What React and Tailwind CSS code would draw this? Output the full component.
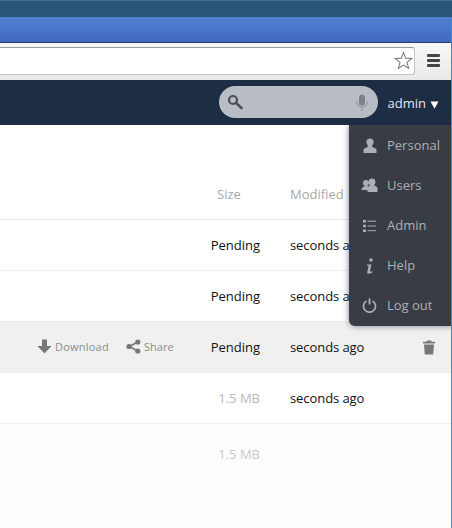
import React from "react";

const Row = ({ size, pending, time, hover, last }) => (
  <div className={`flex items-center text-[13px] leading-none ${last ? "h-[104px] pb-[44px] bg-[#fdfdfd]" : "h-[51px] border-b border-[#eeeeee]"} ${hover ? "bg-[#f0f0f0]" : ""} ${!hover && !last ? "bg-white" : ""}`}>
    <div className="w-[37px] shrink-0" />
    <div className="w-[171px] shrink-0 flex items-center text-[11px] text-[#8c8c8c] -mt-[1px] tracking-[0.02em]">
      {hover && (
        <>
          <svg width="15" height="15" viewBox="0 0 15 15" className="mr-[3px]">
            <path d="M5 0.500h5v6.500h4.500L7.500 14.500 0.500 7H5z" fill="#777" />
          </svg>
          <span className="w-[71px]">Download</span>
          <svg width="15" height="15" viewBox="0 0 15 15" className="mr-[3px]">
            <path d="M11.500 3 3.500 7.500l8 4.500" stroke="#777" strokeWidth="1.600" fill="none" />
            <circle cx="11.800" cy="3" r="2.600" fill="#777" />
            <circle cx="3" cy="7.500" r="2.600" fill="#777" />
            <circle cx="11.800" cy="12" r="2.600" fill="#777" />
          </svg>
          <span className="tracking-normal">Share</span>
        </>
      )}
    </div>
    <div className={`w-[52px] shrink-0 text-right ${pending ? "text-[#111]" : last ? "text-[#c8c8c8]" : "text-[#b8b8b8]"}`}>{size}</div>
    <div className="w-[30px] shrink-0" />
    <div className="w-[132px] shrink-0 text-[#111] whitespace-nowrap tracking-[-0.006em]">{time}</div>
    {hover && (
      <svg width="14" height="15" viewBox="0 0 14 15">
        <path d="M5 0.500h4l.7 1.300H13v1.700H1V1.800h3.300zM2 4.500h10l-.8 10H2.800z" fill="#777" />
      </svg>
    )}
  </div>
);

const MenuItem = ({ icon, label }) => (
  <div className="h-10 flex items-center">
    <div className="w-[38px] shrink-0 flex justify-center -mt-[1px] pl-[3px]">{icon}</div>
    <span className="whitespace-nowrap">{label}</span>
  </div>
);

const c = "#abaeb2";

export default function App() {
  return (
    <div className="relative w-[452px] h-[528px] overflow-hidden bg-white font-['Open_Sans',sans-serif]">
      <div className="h-[17px] bg-[#2a5678] border-t border-[#3f6f91]" />
      <div className="h-[26px] bg-gradient-to-b from-[#5080d0] to-[#3f6ac0] border-b border-[#2c3f68]" />
      <div className="h-[37px] bg-gradient-to-b from-[#f8f8f8] to-[#e9e9e9] flex items-center pb-[2px]">
        <div className="w-[415px] h-[28px] bg-white border border-[#c4c4c4] border-t-[#9a9a9a] border-l-0 rounded-r-[3px] flex items-center justify-end pr-[1px]">
          <svg width="19" height="19" viewBox="0 0 20 20">
            <path d="M10 1.500 12.300 7.500 18.800 7.900 13.700 12 15.400 18.300 10 14.800 4.600 18.300 6.300 12 1.200 7.900 7.700 7.500z" fill="#fff" stroke="#7a7a7a" strokeWidth="1.100" />
          </svg>
        </div>
        <div className="ml-[12px] w-[13px] flex flex-col gap-[2px]">
          <div className="h-[3px] bg-[#444] rounded-[1px]" />
          <div className="h-[3px] bg-[#444] rounded-[1px]" />
          <div className="h-[3px] bg-[#444] rounded-[1px]" />
        </div>
      </div>
      <div className="h-[45px] bg-[#1d2d44] flex items-center justify-end">
        <div className="w-[159px] h-8 rounded-2xl bg-[#b8bcc4] flex items-center justify-between pl-2 pr-[9px] -mt-[1px]">
          <svg width="16" height="16" viewBox="0 0 16 16">
            <circle cx="6" cy="6" r="4" fill="none" stroke="#4a4f58" strokeWidth="2.200" />
            <path d="M9 9l5.500 5" stroke="#4a4f58" strokeWidth="2.600" strokeLinecap="round" />
          </svg>
          <svg width="14" height="17" viewBox="0 0 14 17">
            <rect x="4" y="0.500" width="6" height="11" rx="3" fill="#7d8189" />
            <path d="M1.500 7.500c0 7 11 7 11 0M7 13.500V17" fill="none" stroke="#8f939b" strokeWidth="1.200" />
          </svg>
        </div>
        <div className="ml-[10px] mr-[13px] mt-[2px] text-[13px] text-[#e4e7ec] flex items-center whitespace-nowrap">
          admin
          <svg width="9" height="8" viewBox="0 0 9 8" className="ml-[4px] mt-[2px]">
            <path d="M0.500 0.500h8L4.500 7.800z" fill="#fff" />
          </svg>
        </div>
      </div>

      <div className="h-[95px] flex items-end pb-[18px] text-[13px] leading-none text-[#a8a8a8] border-b border-[#e6e6e6]">
        <div className="w-[217px] shrink-0" />
        <div className="w-[73px] shrink-0">Size</div>
        <div>Modified</div>
      </div>
      <Row size="Pending" pending time="seconds ago" />
      <Row size="Pending" pending time="seconds ago" />
      <Row size="Pending" pending time="seconds ago" hover />
      <Row size="1.5 MB" time="seconds ago" />
      <Row size="1.5 MB" time="" last />

      <div className="absolute left-[349px] top-[125px] w-[103px] h-[201px] bg-[#383c43] rounded-bl-[6px] shadow-[0_0_6px_rgba(29,45,68,0.6)] text-[13px] text-[#adb0b4] pt-[1px]">
        <MenuItem label="Personal" icon={
          <svg width="14" height="15" viewBox="0 0 14 15"><circle cx="7" cy="4" r="3.600" fill={c} /><path d="M5 6h4l.5 3 4 2v4H.5v-4l4-2z" fill={c} /></svg>
        } />
        <MenuItem label="Users" icon={
          <svg width="17" height="15" viewBox="0 0 17 15"><circle cx="5" cy="5" r="3" fill={c} /><path d="M0.500 10.500 3.500 8h3l2 2v2H0.500z" fill={c} /><circle cx="11" cy="4" r="3.400" fill={c} /><path d="M9 7h4l3.500 2.500V14H6.500V9.500z" fill={c} /></svg>
        } />
        <MenuItem label="Admin" icon={
          <svg width="13" height="12" viewBox="0 0 13 12"><path d="M0 0h3v2.500H0zM0 4.700h3v2.500H0zM0 9.400h3V12H0z" fill={c} /><path d="M4.500 1.200H13M4.500 6H13M4.500 10.700H13" stroke={c} /></svg>
        } />
        <MenuItem label="Help" icon={
          <svg width="8" height="16" viewBox="0 0 8 16"><circle cx="5" cy="2" r="1.800" fill={c} /><path d="M1 6.500h4.500L4 13c-.1.600.4.800 2.500.2v1.300L3 15.800c-1.400.200-2-.5-1.700-1.700l1.300-6.400-1.600-.2z" fill={c} /></svg>
        } />
        <MenuItem label="Log out" icon={
          <svg width="15" height="15" viewBox="0 0 15 15"><path d="M4.500 3a6 6 0 1 0 6 0" fill="none" stroke={c} strokeWidth="1.700" /><path d="M7.500 0.500v6" stroke={c} strokeWidth="1.900" /></svg>
        } />
      </div>
      <div className="absolute right-0 top-[17px] bottom-0 w-px bg-[#3f8ad2]" />
    </div>
  );
}
